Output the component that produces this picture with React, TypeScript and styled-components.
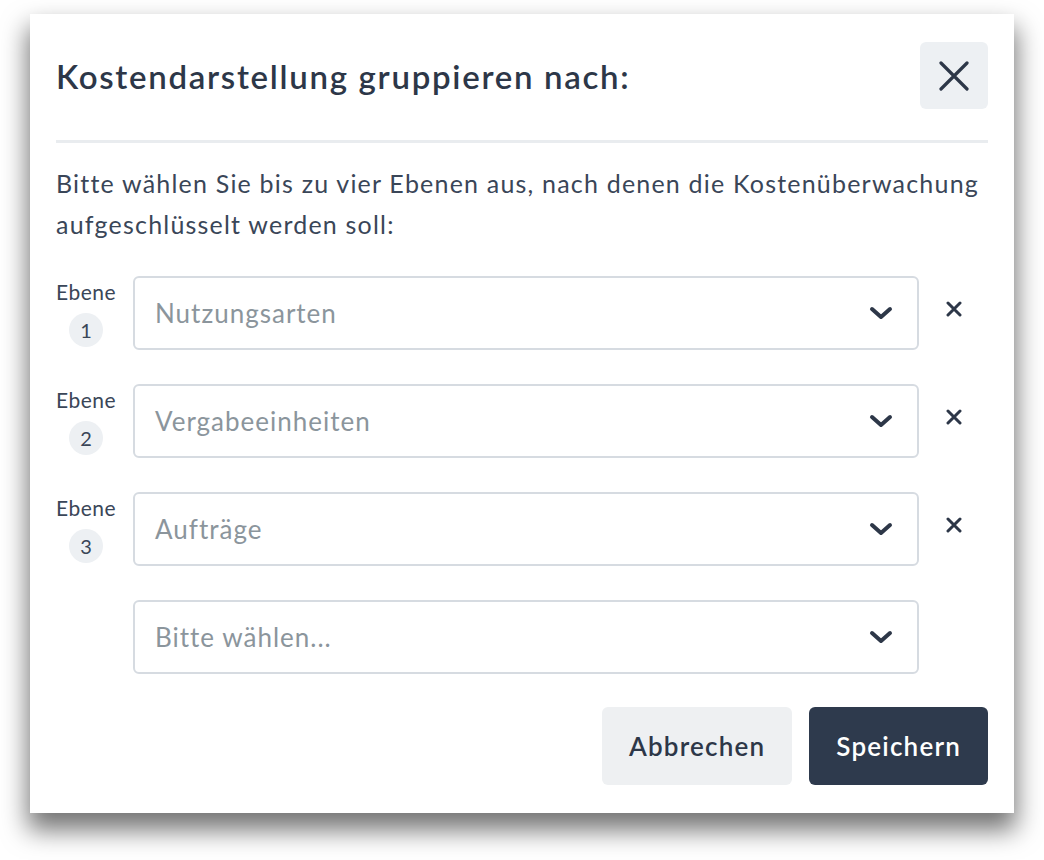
import React from "react";
import styled, { createGlobalStyle } from "styled-components";

const Global = createGlobalStyle`
  html, body { margin: 0; padding: 0; background: #ffffff; }
  body { font-family: Lato, "Open Sans", sans-serif; }
  * { box-sizing: border-box; }
`;

const Page = styled.div`
  padding: 14px 30px 0 30px;
  width: 1044px;
  height: 860px;
  overflow: hidden;
`;

const Modal = styled.div`
  width: 984px;
  height: 799px;
  background: #ffffff;
  padding: 28px 26px 27px 26px;
  box-shadow: 0 15px 24px 2px rgba(0, 0, 0, 0.55);
  display: flex;
  flex-direction: column;
`;

const Header = styled.div`
  display: flex;
  align-items: center;
  justify-content: space-between;
`;

const Title = styled.h1`
  margin: 0;
  font-size: 33px;
  font-weight: 600;
  color: #2d3748;
  letter-spacing: 1.7px;
`;

const CloseButton = styled.button`
  width: 68px;
  height: 67px;
  border: none;
  border-radius: 6px;
  background: #edf0f3;
  display: flex;
  align-items: center;
  justify-content: center;
  padding: 0;
`;

const Divider = styled.hr`
  margin: 31px 0 0 0;
  border: none;
  height: 3px;
  background: #e9ecef;
`;

const Intro = styled.p`
  margin: 20px 0 0 0;
  font-size: 25px;
  line-height: 41px;
  letter-spacing: 1.2px;
  color: #3a4658;
`;

const Rows = styled.div`
  margin-top: 31px;
  display: flex;
  flex-direction: column;
  gap: 34px;
`;

const Row = styled.div`
  display: flex;
  align-items: flex-start;
`;

const Level = styled.div<{ $hidden?: boolean }>`
  width: 60px;
  margin-right: 17px;
  padding-top: 3px;
  display: flex;
  flex-direction: column;
  align-items: center;
  visibility: ${(p) => (p.$hidden ? "hidden" : "visible")};
`;

const LevelLabel = styled.span`
  font-size: 21px;
  line-height: 26px;
  letter-spacing: 0.5px;
  color: #3a4658;
`;

const Badge = styled.span`
  margin-top: 8px;
  width: 34px;
  height: 34px;
  border-radius: 50%;
  background: #edf0f3;
  color: #3a4658;
  font-size: 20px;
  display: flex;
  align-items: center;
  justify-content: center;
`;

const Select = styled.div`
  flex: 1;
  height: 74px;
  border: 2px solid #d6dbe1;
  border-radius: 6px;
  display: flex;
  align-items: center;
  justify-content: space-between;
  padding: 0 24px 0 20px;
`;

const SelectText = styled.span`
  font-size: 26px;
  letter-spacing: 1px;
  color: #8b959c;
`;

const Remove = styled.button<{ $hidden?: boolean }>`
  width: 69px;
  height: 66px;
  border: none;
  background: transparent;
  padding: 0;
  display: flex;
  align-items: center;
  justify-content: center;
  visibility: ${(p) => (p.$hidden ? "hidden" : "visible")};
`;

const Footer = styled.div`
  margin-top: 33px;
  display: flex;
  justify-content: flex-end;
  gap: 17px;
`;

const Button = styled.button<{ $primary?: boolean }>`
  height: 78px;
  border: none;
  border-radius: 6px;
  padding: 0 27px;
  font-family: Lato, "Open Sans", sans-serif;
  font-size: 26px;
  font-weight: 600;
  letter-spacing: 1.2px;
  background: ${(p) => (p.$primary ? "#2e3a4d" : "#eef0f2")};
  color: ${(p) => (p.$primary ? "#ffffff" : "#2d3748")};
`;

const Chevron = () => (
  <svg width="24" height="14" viewBox="0 0 24 14">
    <path d="M3 3 L12 11 L21 3" fill="none" stroke="#2d3748" strokeWidth="4" strokeLinecap="round" strokeLinejoin="round" />
  </svg>
);

const SmallX = () => (
  <svg width="16" height="16" viewBox="0 0 16 16">
    <path d="M2 2 L14 14 M14 2 L2 14" stroke="#2d3748" strokeWidth="3" strokeLinecap="round" />
  </svg>
);

const BigX = () => (
  <svg width="30" height="30" viewBox="0 0 30 30">
    <path d="M2 2 L28 28 M28 2 L2 28" stroke="#2d3748" strokeWidth="3.2" strokeLinecap="round" />
  </svg>
);

const rows = [
  { level: 1, value: "Nutzungsarten" },
  { level: 2, value: "Vergabeeinheiten" },
  { level: 3, value: "Aufträge" },
  { level: 0, value: "Bitte wählen..." },
];

export default function App() {
  return (
    <Page>
      <Global />
      <Modal>
        <Header>
          <Title>Kostendarstellung gruppieren nach:</Title>
          <CloseButton aria-label="Schließen">
            <BigX />
          </CloseButton>
        </Header>
        <Divider />
        <Intro>
          Bitte wählen Sie bis zu vier Ebenen aus, nach denen die Kostenüberwachung aufgeschlüsselt werden soll:
        </Intro>
        <Rows>
          {rows.map((r, i) => (
            <Row key={i}>
              <Level $hidden={!r.level}>
                <LevelLabel>Ebene</LevelLabel>
                <Badge>{r.level || ""}</Badge>
              </Level>
              <Select>
                <SelectText>{r.value}</SelectText>
                <Chevron />
              </Select>
              <Remove $hidden={!r.level} aria-label="Entfernen">
                <SmallX />
              </Remove>
            </Row>
          ))}
        </Rows>
        <Footer>
          <Button>Abbrechen</Button>
          <Button $primary>Speichern</Button>
        </Footer>
      </Modal>
    </Page>
  );
}
